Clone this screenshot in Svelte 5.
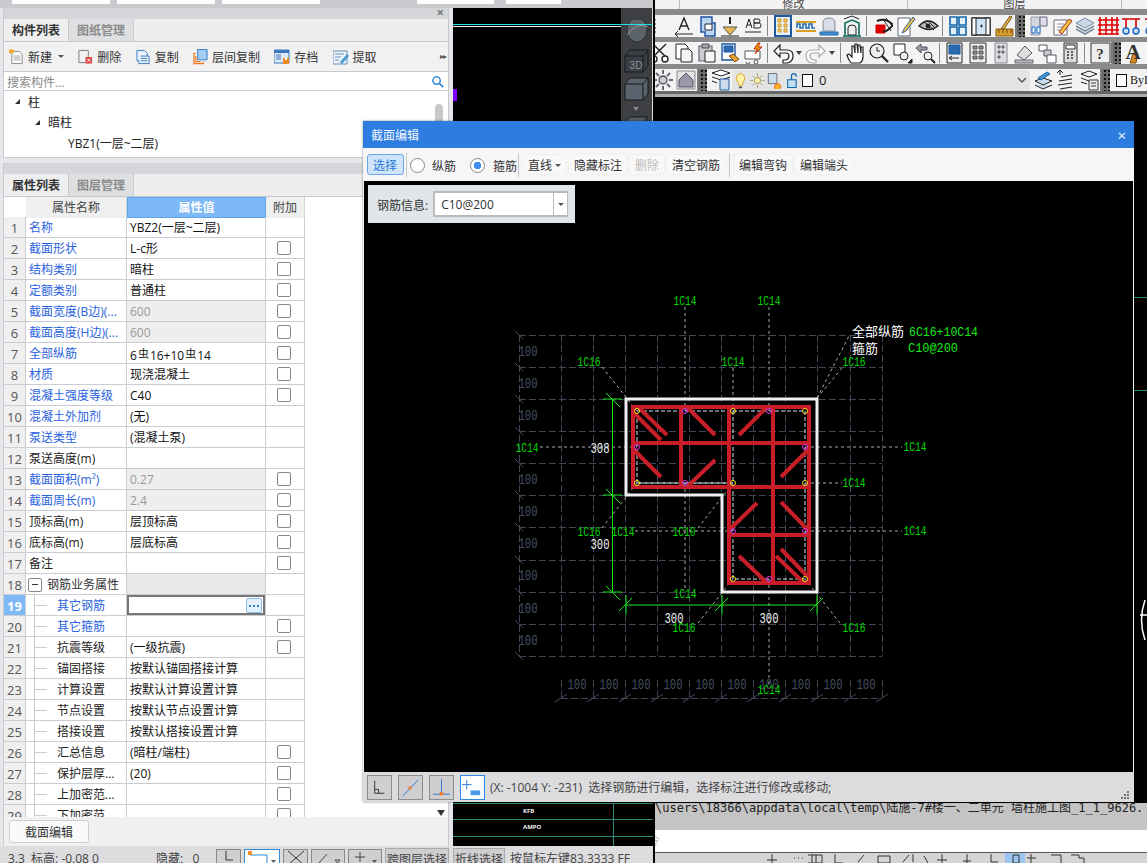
<script>
  // attribute table rows: [name, value, blue label, checkbox, kind]
  const rows = [
    ['名称', 'YBZ2(一层~二层)', 1, 0],
    ['截面形状', 'L-c形', 1, 1],
    ['结构类别', '暗柱', 1, 1],
    ['定额类别', '普通柱', 1, 1],
    ['截面宽度(B边)(...', '600', 1, 1, 'off'],
    ['截面高度(H边)(...', '600', 1, 1, 'off'],
    ['全部纵筋', 'REBAR', 1, 1],
    ['材质', '现浇混凝土', 1, 1],
    ['混凝土强度等级', 'C40', 1, 1],
    ['混凝土外加剂', '(无)', 1, 0],
    ['泵送类型', '(混凝土泵)', 1, 0],
    ['泵送高度(m)', '', 0, 0],
    ['截面面积(m²)', '0.27', 1, 1, 'off'],
    ['截面周长(m)', '2.4', 1, 1, 'off'],
    ['顶标高(m)', '层顶标高', 0, 1],
    ['底标高(m)', '层底标高', 0, 1],
    ['备注', '', 0, 1],
    ['钢筋业务属性', '', 0, 0, 'group'],
    ['其它钢筋', '', 1, 0, 'focus'],
    ['其它箍筋', '', 1, 1, 'sub'],
    ['抗震等级', '(一级抗震)', 0, 1, 'sub'],
    ['锚固搭接', '按默认锚固搭接计算', 0, 0, 'sub'],
    ['计算设置', '按默认计算设置计算', 0, 0, 'sub'],
    ['节点设置', '按默认节点设置计算', 0, 0, 'sub'],
    ['搭接设置', '按默认搭接设置计算', 0, 0, 'sub'],
    ['汇总信息', '(暗柱/端柱)', 0, 1, 'sub'],
    ['保护层厚...', '(20)', 0, 1, 'sub'],
    ['上加密范...', '', 0, 1, 'sub'],
    ['下加密范...', '', 0, 1, 'sub']
  ];

  // section drawing, in page coordinates
  const gridX = [561, 593, 625, 657, 689, 721, 753, 785, 817, 850, 882];
  const gridY = [335, 367, 399, 431, 463, 495, 527, 560, 592, 624, 656];
  const sideLabels = [351, 383, 415, 479, 511, 543, 575, 608, 640];
  const bottomLabels = [577, 609, 641, 673, 705, 737, 769, 801, 833, 866];

  const bars = [
    [633, 407, 809, 407], [633, 407, 633, 487], [633, 487, 809, 487], [633, 443, 809, 443],
    [681, 407, 681, 487], [729, 407, 729, 583], [773, 407, 773, 583], [809, 407, 809, 583],
    [729, 535, 809, 535], [729, 583, 809, 583]
  ];
  const braces = [
    [638, 407, 667, 435], [634, 413, 661, 440], [687, 407, 715, 435], [634, 450, 661, 477],
    [687, 487, 715, 460], [739, 435, 767, 407], [781, 477, 808, 450], [728, 531, 757, 503],
    [781, 502, 808, 530], [739, 556, 767, 583], [776, 556, 804, 583], [781, 549, 808, 577]
  ];
  const yellow = [[637, 411], [733, 411], [805, 411], [637, 483], [733, 483], [805, 483], [733, 579], [805, 579]];
  const pink = [[685, 411], [769, 411], [637, 447], [805, 447], [685, 483], [733, 531], [805, 531], [769, 579]];
  const leaders = [
    [685, 307, 685, 411], [769, 307, 769, 411], [733, 368, 733, 411], [540, 447, 637, 447],
    [805, 447, 902, 447], [805, 483, 842, 483], [635, 531, 733, 531], [805, 531, 902, 531],
    [685, 483, 685, 590], [769, 579, 769, 684], [602, 367, 637, 411], [817, 398, 849, 336],
    [817, 398, 842, 368], [602, 528, 637, 483], [698, 528, 733, 483], [698, 623, 733, 579],
    [840, 623, 805, 579]
  ];
  const labels = [
    ['1C14', 685, 301], ['1C14', 769, 301], ['1C14', 733, 362], ['1C14', 527, 448], ['1C14', 915, 447],
    ['1C14', 854, 483], ['1C14', 623, 532], ['1C14', 915, 531], ['1C14', 685, 594], ['1C14', 769, 690],
    ['1C16', 589, 362], ['1C16', 854, 362], ['1C16', 589, 532], ['1C16', 684, 628], ['1C16', 854, 628],
    ['1C10', 684, 532]
  ];
  const dims = [['308', 600, 448], ['300', 600, 544], ['300', 674, 618], ['300', 769, 618]];

  // toolbar icons, 22 box; each part is d, stroke, fill, width
  const ic = {
    lines: [['M-6 5h12M-6 9h12M-6 13h12M-6 17h12', '#222']],
    aline: [['M3 19h17M5 16l-3 3 3 3', '#222'], ['M6 15l5-12 5 12M8 11h6', '#222', 'none', 1.4]],
    docarrow: [['M5 2h11v6h3v13H9v-4H5z', '#1c4fa0', '#bcd6f2', 1.4], ['M9 9h7v6H9z', '#223', '#fff']],
    plumb: [['M4 4h0M8 4h0M14 4h0M18 4h0M11 2v7', '#222', 'none', 2], ['M4 12h14l-7 8z', '#555', '#e8b850'], ['M2 21h18', '#222']],
    abtext: [['M3 17h16', '#222'], ['M4 13l3-9 3 9M5 10h4M12 4h4q2 0 2 2t-2 2h-4zM12 8h5q2 0 2 2.500t-2 2.500h-5z', '#222']],
    build: [['M3 1h16v20H3z', '#1d5aa0', '#e8eef8', 2], ['M6 4h3v3H6zM12 4h3v3h-3zM6 9h3v3H6zM12 9h3v3h-3zM6 14h3v3H6zM12 14h3v3h-3z', '#d09a20', '#f0d070']],
    wave: [['M1 7h20', '#d8a020', 'none', 2], ['M2 13V9h3v4h3V9h3v4h3V9h3v4h3', '#1e6ab0', 'none', 1.5], ['M1 16h20', '#d8a020', 'none', 2]],
    arch: [['M5 16V8q0-5 6-5t6 5v8z', '#889', '#d8dde8'], ['M2 17h18v3H2z', '#1e6ab0', '#4a90d0']],
    gate: [['M3 4l8-3 7 3', '#222'], ['M4 20V8l7-3 7 3v12', '#0b6b5a', 'none', 1.6], ['M7 20v-7q0-3 4-3t4 3v7z', '#222', '#eee'], ['M2 21h18', '#0b6b5a', 'none', 1.6]],
    eyered: [['M5 10h9v8H5z', '#d00000', '#e00000'], ['M6 6q9-4 16 4-7 8-10 6', '#222', 'none', 2], ['M12 4l8 12M15 3l7 9', '#222']],
    pencil: [['M4 3h12v18H4z', '#667', '#fff'], ['M8 18l2-4 9-12 2 2-9 12z', '#2a5d9a', '#f2c440']],
    eye: [['M2 11q9-10 19 0-9 7-19 0z', '#222', '#bbb', 1.4], ['M7 7l10 8M10 5l8 8', '#222'], ['M11 11m-2 0a2 2 0 1 0 4 0a2 2 0 1 0-4 0', '#222', '#222']],
    win4: [['M3 2h7v8H3zM12 2h7v8h-7zM3 12h7v8H3zM12 12h7v8h-7z', '#1466aa', '#e4f0fa', 1.6]],
    door: [['M2 3h18v17H2z', '#222', '#cfe4f5', 1.4], ['M2 3h4v17H2zM16 3h4v17h-4z', '#222', '#fff'], ['M11 10h1v2h-1z', '#222']],
    brush: [['M3 14h17v7H3z', '#8a5a10', '#d8a030'], ['M8 14l9-13 2 1-8 12z', '#6b4a10', '#e8b850'], ['M6 14v4M10 14v4M14 14v4M18 14v4', '#6b4a10']],
    plates: [['M3 2h9v18H3z', '#99a', '#cfd6df'], ['M12 2h7v9h-7z', '#667', '#dde'], ['M4 12h3v6H4zM9 12h3v6H9z', '#1466cc', '#fff']],
    note: [['M3 5h13v15H3z', '#667', '#fff'], ['M6 9h7M6 12h7M6 15h5', '#889'], ['M8 17L18 4l3 2-10 13z', '#a33', '#f2c040']],
    layers: [['M11 3l9 5-9 5-9-5z', '#7a8da0', '#c8d8e8'], ['M2 11l9 5 9-5M2 14l9 5 9-5', '#7a8da0', 'none', 1.6]],
    redgrid: [['M3 2v18M9 2v18M15 2v18M20 2v18M1 5h21M1 10h21M1 15h21M1 19h21', '#e00000', 'none', 1.6]],
    pins: [['M2 4h18M6 4v9M16 4v9', '#d00000', 'none', 1.6], ['M6 16m-3 0a3 3 0 1 0 6 0a3 3 0 1 0-6 0M16 16m-3 0a3 3 0 1 0 6 0a3 3 0 1 0-6 0', '#1466cc', '#cde', 1.4]],
    cut: [['M3 2l12 12M16 2L4 14', '#222', 'none', 1.4], ['M4 17m-3 0a3 3 0 1 0 6 0a3 3 0 1 0-6 0M15 17m-3 0a3 3 0 1 0 6 0a3 3 0 1 0-6 0', '#222', '#fff', 1.4]],
    copy: [['M3 2h9l3 3v12H3z', '#222', '#fff'], ['M8 7h8l3 3v10H8z', '#222', '#f4f4f4']],
    paste: [['M3 4h13v15H3z', '#667', '#ccc', 1.2], ['M6 2h7v4H6z', '#445', '#aaa'], ['M9 9h10v11H9z', '#222', '#f6f6f6']],
    match: [['M3 2h13v16H3z', '#1d5aa0', '#fff', 1.4], ['M5 4h9v6H5z', '#1d5aa0', '#2a6ab0'], ['M10 14l6 6 4-3-6-5z', '#8a4a10', '#e8a030']],
    spark: [['M3 9h15v8H3z', '#555', '#fff'], ['M4 20a2 2 0 1 0 4 0', '#555'], ['M14 20m-2 0a2 2 0 1 0 4 0a2 2 0 1 0-4 0', '#555'], ['M16 1l-4 6h4l-3 5 7-7h-4l2-4z', '#c83000', '#f0a000']],
    undo: [['M8 3L2 9l6 6v-4h6q3 0 3 3t-3 4h-3v3h4q6-1 6-7t-6-6H8z', '#222', '#fff', 1.2]],
    redo: [['M14 3l6 6-6 6v-4H8q-3 0-3 3t3 4h3v3H7q-6-1-6-7t6-6h7z', '#aaa', '#fff', 1.2]],
    hand: [['M6 21q-3-4-4-8l2-1 3 3V4l2 0 1 7V2h2l1 9V3h2l1 8V5h2v10q0 4-3 6z', '#222', '#fff', 1.2]],
    zoomt: [['M9 9m-7 0a7 7 0 1 0 14 0a7 7 0 1 0-14 0', '#222', '#eee', 1.2], ['M14 14l6 6', '#222', 'none', 2.2], ['M9 5v4h3', '#222']],
    zoomw: [['M3 2h11v11H3z', '#222', '#fff'], ['M13 14m-4 0a4 4 0 1 0 8 0a4 4 0 1 0-8 0', '#222', '#eee'], ['M17 21h4v-4z', '#222', '#222']],
    zoomp: [['M2 6l5-4v3h6v3H7v3z', '#556', '#99a'], ['M14 14m-4 0a4 4 0 1 0 8 0a4 4 0 1 0-8 0', '#222', '#eee'], ['M17 17l4 4', '#222', 'none', 2]],
    prop: [['M3 1h15v20H3z', '#222', '#eee'], ['M5 3h11v9H5z', '#1d5aa0', '#2a6ab0'], ['M6 16h9M8 14l-3 2 3 2', '#222']],
    cells: [['M3 1h16v20H3z', '#333', '#eee'], ['M6 4h4v3H6zM12 4h4v3h-4zM6 9h4v3H6zM12 9h4v3h-4zM6 14h4v3H6zM12 14h4v3h-4z', '#555', '#889']],
    cells2: [['M5 1h12v20H5z', '#889', '#ddd'], ['M8 4h2v2H8zM12 4h2v2h-2zM8 9h2v2H8zM12 9h2v2h-2zM8 14h2v2H8z', '#667', '#889']],
    stamp: [['M4 13l8-9 7 7-8 7z', '#556', '#ddd'], ['M2 18h18v3H2z', '#667', '#bbb']],
    sheets: [['M3 3h8v6H3z', '#556', '#fff'], ['M8 8h7v6H8z', '#556', '#ccc'], ['M11 13h9v8h-9z', '#556', '#fff']],
    calc: [['M5 1h13v20H5z', '#333', '#ddd'], ['M7 3h9v4H7z', '#333', '#fff'], ['M8 10h2M12 10h2M8 13h2M12 13h2M8 16h2M12 16h2', '#333', 'none', 1.4]],
    help: [['M2 1h19v20H2z', '#333', '#eee']],
    gear: [['M11 7a4 4 0 1 0 0.010 0z', '#556', '#ccc', 1.4], ['M11 1v4M11 17v4M1 11h4M17 11h4M4 4l3 3M15 15l3 3M18 4l-3 3M7 15l-3 3', '#667', 'none', 2]],
    house: [['M2 2h18v18H2z', '#889', '#e4e4e4'], ['M4 11l7-7 7 7v7H4z', '#556', '#99a']],
    doclist: [['M2 4l9-3 9 3-9 3z', '#222', '#fff'], ['M2 8l9 3 9-3M2 12l5 2', '#222'], ['M10 10h9v11h-9z', '#1d5aa0', '#cde']],
    bulb: [['M11 2a6 6 0 0 0-4 10l2 6h4l2-6a6 6 0 0 0-4-10z', '#c49a10', '#fff0a8'], ['M9 20h4', '#555', 'none', 2]],
    sun: [['M11 7a4 4 0 1 0 .010 0z', '#8a7a20', '#ffeeb0'], ['M11 2v3M11 17v3M2 11h3M17 11h3M5 5l2 2M15 15l2 2M17 5l-2 2M7 15l-2 2', '#8a7a20']],
    freeze: [['M3 2h11v13H3z', '#556', '#cde'], ['M15 15a4 4 0 1 0 .010 0z', '#e06000', '#ffb020']],
    lock: [['M6 10h11v10H6z', '#1466aa', '#bfe0f6', 1.4], ['M11 10V5q0-3 3-3t3 3v1', '#1466aa', 'none', 1.6]],
    layerbtn: [['M3 12l8-3 9 3-9 4zM3 16l8 4 9-4', '#222', '#cde'], ['M6 9l9-6 3 2-9 6z', '#1466aa', '#4a90d0']],
    layerstep: [['M5 2v4M2 4l3-3 3 3', '#222'], ['M6 8l11-2M4 12l13-2M3 16l14-2M5 20l12-2', '#222', 'none', 1.2]],
    layerlist: [['M3 5l8-3 8 3-8 3zM3 9l8 3M3 13l6 2', '#222'], ['M11 11h9v10h-9z', '#333', '#eee'], ['M13 14h5M13 17h5', '#333']],
    paintA: [['M6 21l3-9 5-1-2 10z', '#7a4a10', '#d88a20']]
  };

  const row1 = ['lines', 'aline', 'docarrow', 'plumb', 'abtext', '|', 'build', 'wave', 'arch', 'gate', '|', 'eyered', 'pencil', 'eye', '|', 'win4', 'door', 'brush', '#', 'plates', 'note', 'layers', 'redgrid', 'pins', 'pins'];
  const row2 = ['cut', 'copy', 'paste', 'match', 'spark', '|', 'undo', 'v', 'redo', 'v', '|', 'hand', 'zoomt', 'zoomw', 'zoomp', '|', 'prop', 'cells', 'cells2', 'stamp', 'sheets', 'calc', '|', 'help', '#', 'paintA'];
</script>

{#snippet glyph(name)}
  <svg class="ti" viewBox="0 0 22 22" width="22" height="22">
    {#each ic[name] as [d, stroke, fill, sw]}
      <path {d} stroke={stroke} fill={fill || 'none'} stroke-width={sw || 1} />
    {/each}
    {#if name === 'help'}<text x="11" y="17" class="ti-txt">?</text>{/if}
    {#if name === 'paintA'}<text x="9" y="17" class="ti-txt big">A</text>{/if}
  </svg>
{/snippet}

{#snippet toolrow(items)}
  {#each items as it}
    {#if it === '|'}<i class="tsep"></i>
    {:else if it === '#'}<i class="tend"></i><i class="grip"></i><i class="tstart"></i>
    {:else if it === 'v'}<i class="mini"></i>
    {:else}<span class="tbtn">{@render glyph(it)}</span>{/if}
  {/each}
{/snippet}

<div class="screen">
  <div class="leftside">
    <div class="topstrip">
      <i class="tb w98"></i><i class="tb w98"></i><i class="tb w98 gap96"></i><i class="tb w77"></i><i class="tb w55"></i>
    </div>

    <div class="main">
      <div class="panels">
        <div class="panel">
          <div class="ptitle"><span class="x">×</span></div>
          <div class="tabs"><span class="tab on">构件列表</span><span class="tab">图纸管理</span></div>
          <div class="ptools">
            <span class="pt">
              <svg viewBox="0 0 16 16" width="15" height="16"><path d="M3 2h8l3 3v10H3z" fill="#fafafa" stroke="#888" /><path d="M5 7h7M5 9h7M5 11h7" stroke="#aaa" /><path d="M0 0h5v4H0z" fill="#f5a623" /></svg>
              新建<i class="caret"></i>
            </span>
            <span class="pt">
              <svg viewBox="0 0 16 16" width="15" height="16"><path d="M1 1h10v13H1z" fill="#f2f2f2" stroke="#777" /><path d="M8 8h7v7H8z" fill="#e04848" /><path d="M10 10l3 3M13 10l-3 3" stroke="#fff" /></svg>
              删除
            </span>
            <span class="pt">
              <svg viewBox="0 0 16 16" width="15" height="16"><path d="M1 1h8l3 3v3h2v8H3V12H1z" fill="#eaf2fb" stroke="#3a78c0" /><path d="M5 7h7M5 9.500h7M5 12h7" stroke="#3a78c0" /></svg>
              复制
            </span>
            <span class="pt">
              <svg viewBox="0 0 16 16" width="15" height="16"><path d="M5 0h10v11H5z" fill="#a8cdf4" stroke="#2f7ad0" /><path d="M3 4H1v11h10v-2M3 7v6h5" stroke="#f07820" fill="none" stroke-width="1.300" /></svg>
              层间复制
            </span>
            <span class="pt">
              <svg viewBox="0 0 16 16" width="16" height="16"><path d="M0 1h15v13H0z" fill="#dbe8f6" stroke="#3a78c0" /><path d="M0 1h15v3H0z" fill="#3a78c0" /><path d="M2 6h5M2 8h5M2 10h5" stroke="#3a78c0" /><path d="M9 9h6v6H9z" fill="#f08a20" /><path d="M11 9h2v2h-2z" fill="#fff" /></svg>
              存档
            </span>
            <span class="pt">
              <svg viewBox="0 0 16 16" width="16" height="16"><path d="M0 2h14v13H0z" fill="#eef3f9" stroke="#6a8fb8" /><path d="M2 5h9M2 8h6M2 11h4" stroke="#6a8fb8" /><path d="M7 13l7-8 2 2-7 8z" fill="#4a9ad0" /></svg>
              提取
            </span>
            <span class="more">▸▸</span>
          </div>
          <div class="search">
            <span>搜索构件...</span>
            <svg viewBox="0 0 14 14" width="13" height="13"><circle cx="6" cy="6" r="4" fill="none" stroke="#2f8ad8" stroke-width="1.600" /><path d="M9 9l4 4" stroke="#2f8ad8" stroke-width="2" /></svg>
          </div>
          <div class="tree">
            <div class="node n1"><i class="tri"></i>柱</div>
            <div class="node n2"><i class="tri"></i>暗柱</div>
            <div class="node n3">YBZ1(一层~二层)</div>
            <i class="scroll"></i>
          </div>
        </div>

        <div class="panel grow">
          <div class="ptitle"></div>
          <div class="tabs"><span class="tab on">属性列表</span><span class="tab">图层管理</span></div>
          <div class="table">
            <div class="hrow">
              <span class="num"></span><span>属性名称</span><span class="hval">属性值</span><span class="hadd">附加</span>
            </div>
            {#each rows as [name, val, blue, chk, kind], i}
              <div class="row" class:off={kind === 'off'} class:group={kind === 'group'} class:focus={kind === 'focus'}>
                <span class="num">{i + 1}</span>
                <span class="name" class:blue class:sub={kind === 'sub' || kind === 'focus'}>
                  {#if kind === 'group'}<i class="minus"></i>{/if}{name}
                </span>
                <span class="val">
                  {#if val === 'REBAR'}6<small>虫</small>16+10<small>虫</small>14{:else}{val}{/if}
                  {#if kind === 'focus'}<i class="dots"></i>{/if}
                </span>
                <span class="add">{#if chk}<i class="chk"></i>{/if}</span>
              </div>
            {/each}
            <i class="downarrow"></i>
          </div>
          <div class="pfoot"><button class="foot-btn">截面编辑</button></div>
        </div>
      </div>

      <div class="mid">
        <i class="purple"></i>
        <i class="cyan"></i>
        <i class="wline"></i>
        <div class="teal t1"></div><div class="teal t2"></div><div class="teal t3"></div><div class="teal tv"></div>
        <span class="blur b1">KFB</span><span class="blur b2">AMPO</span>
        <div class="cube">
          <svg viewBox="0 0 32 130" width="32" height="130">
            <ellipse cx="16" cy="10" rx="10" ry="12" fill="#5c636b" stroke="#2a2d31" />
            <path d="M6 15q10-14 21-8" fill="none" stroke="#99a" />
            <path d="M4 36l5-6h18v16l-5 6H4z" fill="#3a3f46" stroke="#16181b" />
            <path d="M4 36h18v16M22 36l5-6" fill="none" stroke="#16181b" />
            <text x="15" y="49" class="threed">3D</text>
            <path d="M4 64l5-6h18v16l-5 6H4z" fill="#5a636d" stroke="#16181b" />
            <path d="M4 64h18v16M22 64l5-6" fill="none" stroke="#16181b" />
            <path d="M12 87h6l-3 4z" fill="#888" />
            <path d="M4 102l5-5h18l-5 5z" fill="#565c64" stroke="#16181b" />
            <path d="M4 102h18v16H4z" fill="#4a4f56" stroke="#16181b" />
          </svg>
        </div>
      </div>
    </div>

    <div class="status">
      <span class="s1">3.3  标高: -0.08 0</span>
      <span class="s2">隐藏:   0</span>
      <span class="sbtn">
        <svg viewBox="0 0 24 16" width="24" height="16"><path d="M9 1v9h7" fill="none" stroke="#333" /></svg>
      </span>
      <span class="sbtn sel">
        <svg viewBox="0 0 34 16" width="34" height="16"><path d="M5 5h17v12" fill="none" stroke="#2f8ad8" /><path d="M3 1h4v4H3z" fill="#f09030" /><path d="M26 10h5l-2.500 3z" fill="#555" /></svg>
      </span>
      <span class="sbtn">
        <svg viewBox="0 0 24 16" width="24" height="16"><path d="M4 1l16 14M20 1L4 15" stroke="#333" /></svg>
      </span>
      <span class="sbtn wide">
        <svg viewBox="0 0 32 16" width="32" height="16"><path d="M6 14l9-10M6 14h10M23 10h5l-2.500 3z" fill="none" stroke="#444" /></svg>
      </span>
      <span class="sbtn wide">
        <svg viewBox="0 0 32 16" width="32" height="16"><path d="M11 2v10M6 7h10" fill="none" stroke="#444" /><path d="M23 10h5l-2.500 3z" fill="#555" /></svg>
      </span>
      <span class="stext">跨图层选择</span>
      <span class="stext">折线选择</span>
      <span class="s3">按鼠标左键83.3333 FF</span>
    </div>
  </div>

  <div class="right">
    <div class="ribbon"><span class="r1">修改</span><span class="r2">图层</span><span class="r3"></span></div>
    <div class="band first"></div>
    <div class="trow">{@render toolrow(row1)}</div>
    <div class="band"></div>
    <div class="trow">{@render toolrow(row2)}</div>
    <div class="band"></div>
    <div class="trow r3row">
      <span class="tbtn">{@render glyph('gear')}</span>
      <span class="tbtn">{@render glyph('house')}</span>
      <i class="tend"></i><i class="grip"></i><i class="tstart"></i>
      <span class="tbtn">{@render glyph('doclist')}</span>
      <div class="combo-layer">
        <span class="tbtn">{@render glyph('bulb')}</span>
        <span class="tbtn">{@render glyph('sun')}</span>
        <span class="tbtn">{@render glyph('freeze')}</span>
        <span class="tbtn">{@render glyph('lock')}</span>
        <i class="lsq"></i><span class="lzero">0</span>
        <svg class="chev" viewBox="0 0 10 6" width="10" height="6"><path d="M1 1l4 4 4-4" fill="none" stroke="#555" stroke-width="1.400" /></svg>
      </div>
      <span class="tbtn">{@render glyph('layerbtn')}</span>
      <span class="tbtn">{@render glyph('layerstep')}</span>
      <span class="tbtn">{@render glyph('layerlist')}</span>
      <i class="tend"></i><i class="grip"></i>
      <span class="bylayer"><i class="lsq"></i>ByLayer</span>
    </div>
    <div class="band dark"></div>
    <div class="cad">
      <i class="cad-l l1"></i><i class="cad-l l2"></i>
      <svg class="cad-arc" viewBox="0 0 10 40" width="10" height="40"><path d="M8 0q-7 20 0 40M3 15h7" fill="none" stroke="#fff" stroke-width="1.500" /></svg>
    </div>
    <div class="cmd">\users\18366\appdata\local\temp\陆施-7#楼一、二单元 墙柱施工图_1_1_9626.</div>
    <div class="cmdline"><span>令</span></div>
    <div class="rstatus">
      <svg viewBox="0 0 492 10" width="492" height="10">
        <path d="M350 0h20v10h-20z" fill="#9cc4ee" />
        <path d="M117 1v9M112 7h10M139 5h1M143 5h1M147 5h1M153 2h14v8h-14M157 2v8M161 2v8M180 1v9h8M203 9l6-7M223 3h12v7h-12zM248 9l6-7M258 1v8M269 3l4 7M287 1v9M282 7h10M312 1v9M308 8h8M336 1v8h7M358 2h6v8h-6zM376 1v9M372 5h9M396 2h10v8M416 2h8v3h5v5" fill="none" stroke="#333" />
      </svg>
    </div>
  </div>

  <!-- floating section editor -->
  <div class="dialog">
    <div class="dtitle"><span>截面编辑</span><span class="dclose">×</span></div>
    <div class="dtools">
      <button class="btn sel">选择</button>
      <i class="dsep"></i>
      <label class="radio"><i class="dot"></i>纵筋</label>
      <label class="radio"><i class="dot on"></i>箍筋</label>
      <i class="dsep s2"></i>
      <button class="btn">直线<i class="caret c2"></i></button>
      <button class="btn">隐藏标注</button>
      <button class="btn dis">删除</button>
      <button class="btn">清空钢筋</button>
      <i class="dsep s3"></i>
      <button class="btn">编辑弯钩</button>
      <button class="btn">编辑端头</button>
    </div>
    <div class="canvas">
      <div class="info">
        <span class="ilabel">钢筋信息:</span>
        <div class="combo"><span class="cv">C10@200</span><span class="cb"><i class="caret c3"></i></span></div>
      </div>
      <svg class="draw" viewBox="364 181 769 591" width="769" height="591">
        <g class="grid">
          {#each gridY as y}<line x1="519" y1={y} x2="882" y2={y} />{/each}
          <line x1="519" y1="335" x2="519" y2="656" />
          {#each gridX as x}
            <line x1={x} y1="335" x2={x} y2="656" />
            <line x1={x} y1="680" x2={x} y2="698" />
          {/each}
          <line x1="561" y1="698" x2="882" y2="698" />
        </g>
        <g class="ticks">
          {#each gridY as y}<line x1="515" y1={y - 4} x2="523" y2={y + 4} />{/each}
          {#each gridX as x}<line x1={x - 6} y1="702" x2={x + 6} y2="694" />{/each}
        </g>
        {#each sideLabels as y}<text class="hund" x="528" y={y + 5} textLength="19" lengthAdjust="spacingAndGlyphs">100</text>{/each}
        {#each bottomLabels as x}<text class="hund" {x} y="689" textLength="19" lengthAdjust="spacingAndGlyphs">100</text>{/each}

        <g class="lead">
          {#each leaders as [x1, y1, x2, y2]}<line {x1} {y1} {x2} {y2} />{/each}
        </g>

        <path class="conc" d="M626 399H817V592H722V495H626Z" />

        <path class="tie" d="M637 411H805V579H733V483H637Z M733 411V483 M637 483H733" />
        <g class="bar">
          {#each bars as [x1, y1, x2, y2]}<line {x1} {y1} {x2} {y2} />{/each}
        </g>
        <g class="brace">
          {#each braces as [x1, y1, x2, y2]}<line {x1} {y1} {x2} {y2} />{/each}
        </g>
        {#each yellow as [x, y]}<circle class="dy" cx={x} cy={y} r="2.500" />{/each}
        {#each pink as [x, y]}<circle class="dp" cx={x} cy={y} r="2.500" />{/each}

        <g class="dim">
          <path d="M612.500 399V592 M603 399H622 M606 393L620 407 M603 495H622 M606 489L620 503 M603 592H622 M606 586L620 600" />
          <path d="M626 605H817 M626 595V615 M619 611L632 598 M722 595V615 M715 611L728 598 M817 595V615 M810 611L823 598" />
        </g>

        {#each labels as [t, x, y]}<text class="lbl" {x} y={y + 4} textLength="23" lengthAdjust="spacingAndGlyphs">{t}</text>{/each}
        {#each dims as [t, x, y]}<text class="dimt" {x} y={y + 5} textLength="19" lengthAdjust="spacingAndGlyphs">{t}</text>{/each}

        <text class="cn" x="852" y="336">全部纵筋</text>
        <text class="cn" x="852" y="353">箍筋</text>
        <text class="gr" x="909" y="336" textLength="69" lengthAdjust="spacingAndGlyphs">6C16+10C14</text>
        <text class="gr" x="908" y="352" textLength="50" lengthAdjust="spacingAndGlyphs">C10@200</text>
      </svg>
    </div>
    <div class="dstatus">
      <span class="dbtn"><svg viewBox="0 0 24 24" width="23" height="23"><path d="M7 5v13h10M7 14h4v4" fill="none" stroke="#333" /></svg></span>
      <span class="dbtn"><svg viewBox="0 0 24 24" width="23" height="23"><path d="M4 21L20 4" stroke="#2f7ad0" /><path d="M10 11h3v3h-3z" fill="#f07820" /></svg></span>
      <span class="dbtn"><svg viewBox="0 0 24 24" width="23" height="23"><path d="M12 3v16M3 19h18" stroke="#2f7ad0" /><path d="M10 17h4v3h-4z" fill="#f07820" /></svg></span>
      <span class="dbtn act"><svg viewBox="0 0 24 24" width="23" height="23"><path d="M6 4v10M1 9h10" stroke="#2f7ad0" /><path d="M10 15h10v5H10z" fill="#4a9ae8" /></svg></span>
      <span class="dmsg">(X: -1004 Y: -231)  选择钢筋进行编辑，选择标注进行修改或移动;</span>
      <svg class="dgrip" viewBox="0 0 10 10" width="10" height="10"><path d="M7 1h2v2H7zM4 4h2v2H4zM7 4h2v2H7zM1 7h2v2H1zM4 7h2v2H4zM7 7h2v2H7z" fill="#777" /></svg>
    </div>
  </div>
</div>

<style>
  :global(body) {
    margin: 0;
    background: #000;
  }
  .screen {
    position: relative;
    width: 1147px;
    height: 863px;
    overflow: hidden;
    display: flex;
    font-family: "Open Sans", "Noto Sans CJK SC", sans-serif;
    font-size: 12px;
    color: #222;
  }
  i {
    display: block;
    font-style: normal;
  }

  .leftside {
    width: 653px;
    display: flex;
    flex-direction: column;
    flex: none;
  }
  .topstrip {
    height: 8px;
    background: #c8cace;
    display: flex;
    padding-left: 12px;
    gap: 7px;
  }
  .tb {
    height: 4px;
    background: #fff;
  }
  .w98 { width: 98px; }
  .gap96 { margin-right: 90px; }
  .w77 { width: 77px; }
  .w55 { width: 55px; margin-left: 5px; }

  .main {
    flex: 1;
    display: flex;
    min-height: 0;
  }
  .panels {
    width: 453px;
    padding: 0 4px 0 3px;
    box-sizing: border-box;
    background: #e6e7ea;
    display: flex;
    flex-direction: column;
    gap: 5px;
    flex: none;
  }
  .panel {
    background: #fff;
    display: flex;
    flex-direction: column;
    border: solid #c6c9cd;
    border-width: 0 1px 1px;
  }
  .panel.grow {
    flex: 1;
    min-height: 0;
    border-bottom: 0;
  }
  .ptitle {
    height: 11px;
    background: #d4d6da;
    position: relative;
  }
  .x {
    position: absolute;
    right: 4px;
    top: -4px;
    font-size: 13px;
    line-height: 16px;
    color: #777;
    font-weight: 700;
  }
  .tabs {
    height: 22px;
    background: #eeeeef;
    border-bottom: 1px solid #c6c9cd;
    display: flex;
  }
  .tab {
    width: 64px;
    text-align: center;
    line-height: 24px;
    background: #dedfe1;
    color: #8b8b8b;
    font-weight: 700;
    border-right: 1px solid #c6c9cd;
  }
  .tab.on {
    background: #eeeeef;
    color: #333;
  }
  .ptools {
    height: 29px;
    background: #f1f1f2;
    border-bottom: 1px solid #c6c9cd;
    display: flex;
    align-items: center;
    gap: 14.300px;
    padding-left: 5px;
    position: relative;
  }
  .pt {
    display: flex;
    align-items: center;
    gap: 4px;
    color: #333;
  }
  .caret {
    width: 0;
    height: 0;
    border: 3px solid transparent;
    border-top: 3px solid #555;
    border-bottom: 0;
    margin-left: 2px;
  }
  .more {
    position: absolute;
    right: 2px;
    top: 8px;
    font-size: 8px;
    line-height: 12px;
    color: #555;
    letter-spacing: -1px;
  }
  .search {
    height: 18px;
    border-bottom: 1px solid #c6c9cd;
    display: flex;
    align-items: center;
    justify-content: space-between;
    padding: 0 4px 0 3px;
    color: #8a8a8a;
  }
  .search span { padding-top: 2px; }
  .tree {
    height: 66px;
    position: relative;
    color: #222;
  }
  .node {
    height: 21px;
    line-height: 21px;
    padding-left: 24px;
    position: relative;
  }
  .n1 { line-height: 23px; }
  .n2 { padding-left: 44px; }
  .n3 { padding-left: 64px; }
  .tri {
    position: absolute;
    left: 11px;
    top: 8px;
    width: 0;
    height: 0;
    border-left: 5px solid transparent;
    border-bottom: 5px solid #333;
  }
  .n2 .tri { left: 31px; }
  .scroll {
    position: absolute;
    right: 5px;
    top: 13px;
    width: 8px;
    height: 40px;
    border-radius: 4px;
    background: #c8c8c8;
  }

  .table {
    flex: 1;
    min-height: 0;
    overflow: hidden;
    position: relative;
    background: #fff;
  }
  .hrow, .row {
    display: grid;
    grid-template-columns: 22px 101px 139px 39px;
    height: 21px;
    box-sizing: border-box;
  }
  .hrow {
    height: 20px;
    text-align: center;
    line-height: 21px;
    color: #444;
  }
  .hrow > span {
    background: #efefef;
    border-right: 1px solid #d6d6d6;
  }
  .hrow > .num { background: #fff; border: 0; }
  .hrow .hval {
    background: #7db8f7;
    color: #fff;
    font-weight: 700;
    border: 1px solid #5da3ee;
    line-height: 19px;
  }
  .row > span {
    border-right: 1px solid #c9cdd2;
    border-bottom: 1px solid #c9cdd2;
    line-height: 22px;
    white-space: nowrap;
    overflow: hidden;
  }
  .row .num {
    background: #efefef;
    text-align: center;
    color: #555;
    font-size: 13px;
  }
  .name {
    padding-left: 3px;
    color: #222;
    position: relative;
  }
  .name.blue { color: #2a62e0; }
  .name.sub {
    padding-left: 31px;
  }
  .name.sub::before {
    content: '';
    position: absolute;
    left: 8px;
    top: -1px;
    bottom: -1px;
    border-left: 1px solid #c9cdd2;
  }
  .name.sub::after {
    content: '';
    position: absolute;
    left: 9px;
    top: 10px;
    width: 12px;
    border-top: 1px solid #c9cdd2;
  }
  .val {
    padding-left: 3px;
    color: #111;
    position: relative;
  }
  .val small {
    font-size: 11px;
    vertical-align: 2px;
    margin: 0 1px;
  }
  .row.off .val {
    background: #eeeeee;
    color: #999;
  }
  .row.group .name {
    padding-left: 21px;
    color: #333;
  }
  .row.group .val { background: #e9e9e9; }
  .minus {
    position: absolute;
    left: 2px;
    top: 4px;
    width: 12px;
    height: 12px;
    border: 1px solid #888;
    border-radius: 2px;
  }
  .minus::after {
    content: '';
    position: absolute;
    left: 3px;
    top: 5px;
    width: 6px;
    border-top: 1px solid #333;
  }
  .row.focus .num {
    background: #7db8f7;
    color: #fff;
    font-weight: 700;
  }
  .row.focus .val {
    box-shadow: inset 0 0 0 2px #777;
  }
  .dots {
    position: absolute;
    right: 3px;
    top: 3px;
    width: 14px;
    height: 13px;
    border: 1px solid #8bbcf0;
    border-radius: 2px;
    background: #e4f0fc radial-gradient(#2f7ad0 1px, transparent 1.300px) 1px 50% / 4px 4px repeat-x;
  }
  .add {
    display: flex;
    align-items: center;
    justify-content: center;
    padding-right: 2px;
  }
  .chk {
    width: 12px;
    height: 12px;
    border: 1px solid #888;
    border-radius: 2px;
    margin-top: -1px;
    background: #fff;
  }
  .downarrow {
    position: absolute;
    right: 3px;
    bottom: 1px;
    width: 0;
    height: 0;
    border: 4px solid transparent;
    border-top: 6px solid #333;
    border-bottom: 0;
  }
  .pfoot {
    height: 29px;
    background: #f0f0f1;
    display: flex;
    align-items: center;
    padding-left: 5px;
  }
  .foot-btn {
    width: 80px;
    height: 23px;
    border: 1px solid #c8d0d8;
    border-radius: 3px;
    background: #fafafa;
    font: inherit;
    color: #333;
  }

  .mid {
    flex: 1;
    background: #000;
    position: relative;
    display: flex;
    justify-content: flex-end;
  }
  .purple {
    position: absolute;
    left: 0;
    top: 81px;
    width: 4px;
    height: 12px;
    background: #8000ff;
  }
  .cyan, .wline {
    position: absolute;
    left: 0;
    right: 0;
    height: 1px;
    z-index: 2;
  }
  .cyan { top: 16px; background: #20e0e0; }
  .wline { top: 18px; background: #e8e8e8; right: 32px; }
  .teal {
    position: absolute;
    background: #2a8a78;
  }
  .t1, .t2, .t3 { left: 0; right: 0; height: 1px; }
  .t1 { top: 795px; }
  .t2 { top: 811px; }
  .t3 { top: 828px; }
  .tv { left: 160px; top: 795px; bottom: 0; width: 1px; }
  .blur {
    position: absolute;
    left: 70px;
    color: #eee;
    font-size: 6px;
    line-height: 8px;
    font-weight: 700;
  }
  .b1 { top: 799px; }
  .b2 { top: 815px; }
  .cube {
    width: 32px;
    height: 780px;
    background: #3d3f42;
    position: absolute;
    right: 0;
    top: 0;
    border-right: 1px solid #ddd;
    padding-top: 12px;
    box-sizing: border-box;
  }
  .threed {
    fill: #8a8f96;
    font: 10px "Liberation Sans", sans-serif;
    text-anchor: middle;
  }

  .status {
    height: 17px;
    background: #dddde0;
    display: flex;
    align-items: flex-start;
    color: #444;
    white-space: pre;
    overflow: hidden;
  }
  .status > span {
    line-height: 25px;
    flex: none;
  }
  .s1 { margin-left: 8px; width: 148px; }
  .s2 { width: 60px; }
  .status > .sbtn {
    height: 14px;
    width: 25px;
    background: #cfcfd2;
    border: 1px solid #8a8a8a;
    border-bottom: 0;
    box-sizing: border-box;
    margin: 3px 3px 0 0;
  }
  .sbtn svg { display: block; }
  .status > .sbtn.sel {
    width: 36px;
    background: #fff;
    border-color: #2f8ad8;
  }
  .status > .sbtn.wide { width: 34px; }
  .status > .stext {
    background: #cfcfd2;
    border: 1px solid #aaa;
    border-bottom: 0;
    box-sizing: border-box;
    padding: 0 1px;
    margin: 2px 4px 0 0;
    line-height: 21px;
  }
  .s3 { margin-left: 1px; }

  .right {
    flex: 1;
    min-width: 0;
    display: flex;
    flex-direction: column;
    background: #7a7a7a;
    margin-left: 2px;
    overflow: hidden;
  }
  .ribbon {
    height: 9px;
    background: #f2f2f2;
    display: flex;
    overflow: hidden;
    font-size: 11px;
    line-height: 8px;
    color: #444;
    flex: none;
  }
  .ribbon span {
    border-left: 1px solid #bbb;
    text-align: center;
  }
  .r1 { width: 227px; margin-left: 24px; }
  .r2 { width: 213px; }
  .r3 { flex: 1; }
  .band {
    height: 5px;
    background: #8a8a8a;
    flex: none;
  }
  .band.first { height: 6px; }
  .band.dark {
    height: 6px;
    background: linear-gradient(#666 0 3px, #aaa 3px);
  }
  .trow {
    height: 22px;
    background: #f3f3f3;
    display: flex;
    align-items: center;
    overflow: hidden;
    flex: none;
    margin-left: -6px;
  }
  .r3row { margin-left: -4px; }
  .tbtn {
    width: 23px;
    height: 22px;
    display: flex;
    align-items: center;
    justify-content: center;
    flex: none;
  }
  .ti { display: block; }
  .ti-txt {
    font: 700 15px "Liberation Serif", serif;
    text-anchor: middle;
    fill: #333;
  }
  .ti-txt.big { font-size: 21px; }
  .tsep {
    width: 1px;
    height: 20px;
    background: #888;
    margin: 0 3px;
    flex: none;
  }
  .tend {
    width: 2px;
    height: 100%;
    background: #7a7a7a;
    flex: none;
  }
  .grip {
    width: 8px;
    height: 100%;
    flex: none;
    background: #6a6a6a radial-gradient(#111 1px, transparent 1px) 1px 0 / 4px 4px;
  }
  .tstart { width: 2px; height: 100%; flex: none; }
  .mini {
    width: 0;
    height: 0;
    border: 3px solid transparent;
    border-top: 4px solid #444;
    border-bottom: 0;
    margin: 0 2px;
    flex: none;
  }
  .combo-layer {
    width: 298px;
    height: 21px;
    background: #e4e4e4;
    border-radius: 3px;
    display: flex;
    align-items: center;
    flex: none;
    box-sizing: border-box;
    margin-right: 1px;
  }
  .combo-layer .tbtn { width: 17px; }
  .combo-layer .ti { width: 17px; height: 17px; }
  .lsq {
    width: 9px;
    height: 11px;
    background: #fff;
    border: 1px solid #111;
    flex: none;
    margin-left: 2px;
  }
  .lzero {
    margin-left: 6px;
    flex: 1;
    font-size: 13px;
  }
  .chev { margin-right: 3px; }
  .bylayer {
    display: flex;
    align-items: center;
    gap: 3px;
    padding-left: 4px;
    font: 12px "Liberation Serif", serif;
    color: #222;
  }
  .cad {
    flex: 1;
    background: #000;
    position: relative;
    min-height: 0;
  }
  .cad-l {
    position: absolute;
    right: 0;
    width: 20px;
    height: 1px;
    background: #2a8a78;
  }
  .l1 { top: 200px; }
  .l2 { top: 293px; }
  .cad-arc {
    position: absolute;
    right: 0;
    top: 503px;
  }
  .cmd {
    height: 27px;
    background: #c4c4c4;
    font: 12px/10px "DejaVu Sans Mono", "Noto Sans CJK SC", monospace;
    color: #222;
    white-space: nowrap;
    overflow: hidden;
    flex: none;
  }
  .cmdline {
    height: 23px;
    background: #fff;
    color: #bbb;
    font-size: 11px;
    line-height: 22px;
    flex: none;
    border-bottom: 1px solid #555;
    box-sizing: border-box;
    overflow: hidden;
  }
  .cmdline span { margin-left: -6px; }
  .rstatus {
    height: 10px;
    background: #d4d4d4;
    flex: none;
  }
  .rstatus svg { display: block; }

  .dialog {
    position: absolute;
    left: 363px;
    top: 121px;
    width: 771px;
    height: 681px;
    display: flex;
    flex-direction: column;
    background: #f4f4f5;
    box-shadow: 0 0 2px rgba(0, 0, 0, .5);
    z-index: 5;
  }
  .dtitle {
    height: 27px;
    background: #2d7de0;
    color: #f4f8ff;
    display: flex;
    justify-content: space-between;
    align-items: center;
    padding: 0 8px;
    font-size: 12px;
    flex: none;
  }
  .dclose { font-size: 15px; }
  .dtools {
    height: 33px;
    background: #f6f6f7;
    display: flex;
    align-items: center;
    padding-left: 4px;
    flex: none;
    box-sizing: border-box;
  }
  .btn {
    height: 21px;
    padding: 2px 5px 0;
    border: 1px solid #f0f0f0;
    border-radius: 3px;
    background: #f8f8f9;
    font: inherit;
    color: #333;
    margin-right: 1px;
    display: flex;
    align-items: center;
    line-height: 18px;
    white-space: nowrap;
  }
  .btn.sel {
    width: 37px;
    background: #cfe4fb;
    border-color: #6aa8ee;
    color: #2a78d8;
    margin-right: 2px;
  }
  .btn.dis { color: #bbb; }
  .c2 { margin-left: 3px; margin-right: 0; }
  .dsep {
    width: 1px;
    height: 24px;
    background: #c8c8c8;
    margin-right: 3px;
    flex: none;
  }
  .dsep.s2 { margin-right: 3px; }
  .dsep.s3 { margin: 0 3px 0 2px; }
  .radio {
    display: flex;
    align-items: center;
    width: 60px;
    flex: none;
    color: #333;
    padding-top: 2px;
  }
  .radio + .radio { width: 48px; }
  .dot {
    width: 13px;
    height: 13px;
    border: 1px solid #888;
    border-radius: 50%;
    margin-right: 7px;
    background: #fff;
    flex: none;
  }
  .dot.on {
    background: radial-gradient(#3f8ef0 3.500px, #fff 4px);
    margin-right: 8px;
  }
  .canvas {
    flex: 1;
    background: #000;
    position: relative;
    min-height: 0;
    margin: 0 1px;
  }
  .info {
    position: absolute;
    left: 4px;
    top: 4px;
    width: 207px;
    height: 38px;
    background: #e0e6e8;
    display: flex;
    align-items: center;
    padding-left: 9px;
    box-sizing: border-box;
    gap: 5px;
    z-index: 1;
    color: #333;
  }
  .ilabel { padding-top: 2px; }
  .combo {
    width: 135px;
    height: 26px;
    display: flex;
    border: 2px solid #bbb;
    border-right: 1px solid #bbb;
    box-sizing: border-box;
    background: #fff;
    line-height: 24px;
  }
  .cv { flex: 1; padding-left: 6px; border-right: 1px solid #bbb; }
  .cb {
    width: 13px;
    display: flex;
    align-items: center;
    justify-content: center;
  }
  .c3 { margin: 0; }
  .draw {
    position: absolute;
    left: 0;
    top: 0;
    display: block;
  }
  .grid line {
    stroke: #3f4655;
    stroke-width: 1;
    stroke-dasharray: 7 3;
    shape-rendering: crispEdges;
  }
  .ticks line {
    stroke: #4a5060;
    stroke-width: 1;
  }
  .hund {
    fill: #474f60;
    font: 14px "Liberation Mono", monospace;
    text-anchor: middle;
  }
  .lead line {
    stroke: #a8a8a8;
    stroke-width: 1;
    stroke-dasharray: 3 3;
  }
  .conc {
    fill: none;
    stroke: #efefef;
    stroke-width: 3;
  }
  .bar line {
    stroke: #c81e28;
    stroke-width: 4;
    stroke-linecap: square;
  }
  .brace line {
    stroke: #c81e28;
    stroke-width: 4;
  }
  .tie {
    fill: none;
    stroke: #cfe0ee;
    stroke-width: 1;
    stroke-dasharray: 4 2;
  }
  .dy, .dp {
    fill: none;
    stroke-width: 1;
  }
  .dy { stroke: #f4dc30; }
  .dp { stroke: #e030e0; }
  .dim path {
    fill: none;
    stroke: #18e818;
    stroke-width: 1;
  }
  .lbl {
    fill: #00d800;
    font: 13px "Liberation Mono", monospace;
    text-anchor: middle;
  }
  .dimt {
    fill: #f4f4f4;
    font: 14px "Liberation Mono", monospace;
    text-anchor: middle;
  }
  .cn {
    fill: #fff;
    font: 13px "Noto Sans CJK SC", sans-serif;
  }
  .gr {
    fill: #18e818;
    font: 13px "Liberation Mono", monospace;
  }
  .dstatus {
    height: 30px;
    background: #dcdcde;
    display: flex;
    align-items: center;
    padding-left: 4px;
    gap: 6px;
    flex: none;
    position: relative;
    color: #444;
  }
  .dbtn {
    width: 25px;
    height: 25px;
    background: #cfcfd2;
    border: 1px solid #8c8c8c;
    box-sizing: border-box;
  }
  .dbtn svg { display: block; }
  .dbtn.act {
    background: #fff;
    border: 1px solid #2f8ae8;
  }
  .dmsg {
    margin-left: -1px;
    white-space: pre;
  }
  .dgrip {
    position: absolute;
    right: 4px;
    bottom: 2px;
  }
</style>
